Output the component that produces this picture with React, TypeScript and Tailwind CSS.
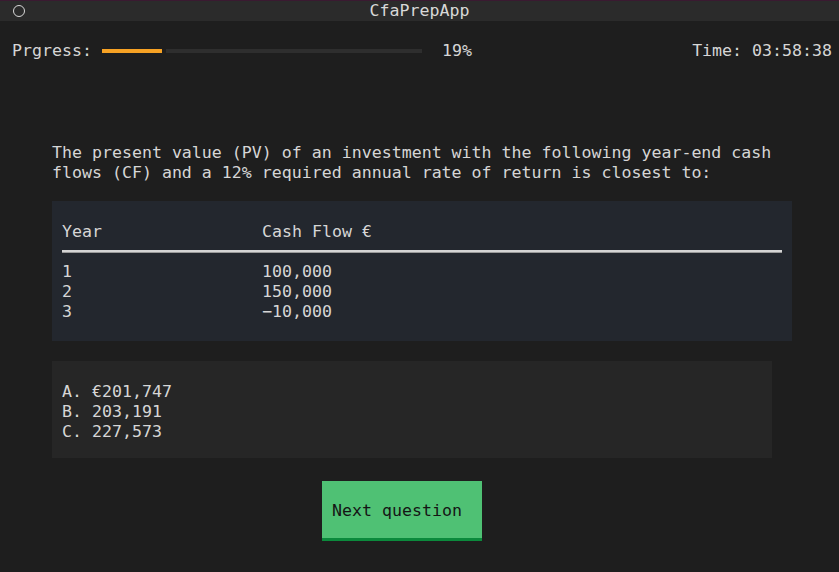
import React from "react";

const rows = [
    ["1", "100,000"],
    ["2", "150,000"],
    ["3", "−10,000"],
];

const answers = ["A. €201,747", "B. 203,191", "C. 227,573"];

const App = () => {
    return (
        <div className="w-[839px] h-[572px] bg-[#1e1e1e] border-t border-[#3a1a31] text-[#d6d6d6] font-['DejaVu_Sans_Mono',monospace] text-[16.6px] leading-[20px] flex flex-col overflow-hidden">
            <div className="relative h-[20px] bg-[#2b2b2b] flex items-center justify-center">
                <div className="absolute left-[13px] top-[4px] w-[12px] h-[12px] rounded-full border-[1.5px] border-[#d8d8d8]"></div>
                <span className="text-[#d8d8d8]">CfaPrepApp</span>
            </div>

            <div className="flex items-center mt-[20px] pl-[12px] pr-[7px]">
                <span>Prgress:</span>
                <div className="ml-[10px] w-[320px] h-[4px] flex gap-[4px]">
                    <div className="w-[60px] h-full bg-[#f7a224]"></div>
                    <div className="flex-1 h-full bg-[#2e2e2e]"></div>
                </div>
                <span className="ml-[20px]">19%</span>
                <span className="ml-auto">Time: 03:58:38</span>
            </div>

            <div className="pl-[52px] mt-[82px]">
                <p>
                    The present value (PV) of an investment with the following year-end cash
                    <br />
                    flows (CF) and a 12% required annual rate of return is closest to:
                </p>

                <div className="mt-[18px] w-[740px] bg-[#23272e] px-[10px] pt-[21px] pb-[19px]">
                    <div className="flex">
                        <span className="w-[200px]">Year</span>
                        <span>Cash Flow €</span>
                    </div>
                    <div className="mt-[8px] mb-[9px] h-[3px] bg-[#d4d4d4] border-b border-[#9a9a9a]"></div>
                    {rows.map(([y, cf]) => (
                        <div key={y} className="flex">
                            <span className="w-[200px]">{y}</span>
                            <span>{cf}</span>
                        </div>
                    ))}
                </div>

                <div className="mt-[20px] w-[720px] bg-[#262626] px-[10px] pt-[21px] pb-[16px]">
                    {answers.map((a) => (
                        <div key={a}>{a}</div>
                    ))}
                </div>

                <button className="ml-[270px] mt-[23px] w-[160px] h-[60px] pl-[10px] pt-[3px] bg-[#4fc174] border-b-[3px] border-[#0b8a3c] text-[#151515] text-left">
                    Next question
                </button>
            </div>
        </div>
    );
};

export default App;
